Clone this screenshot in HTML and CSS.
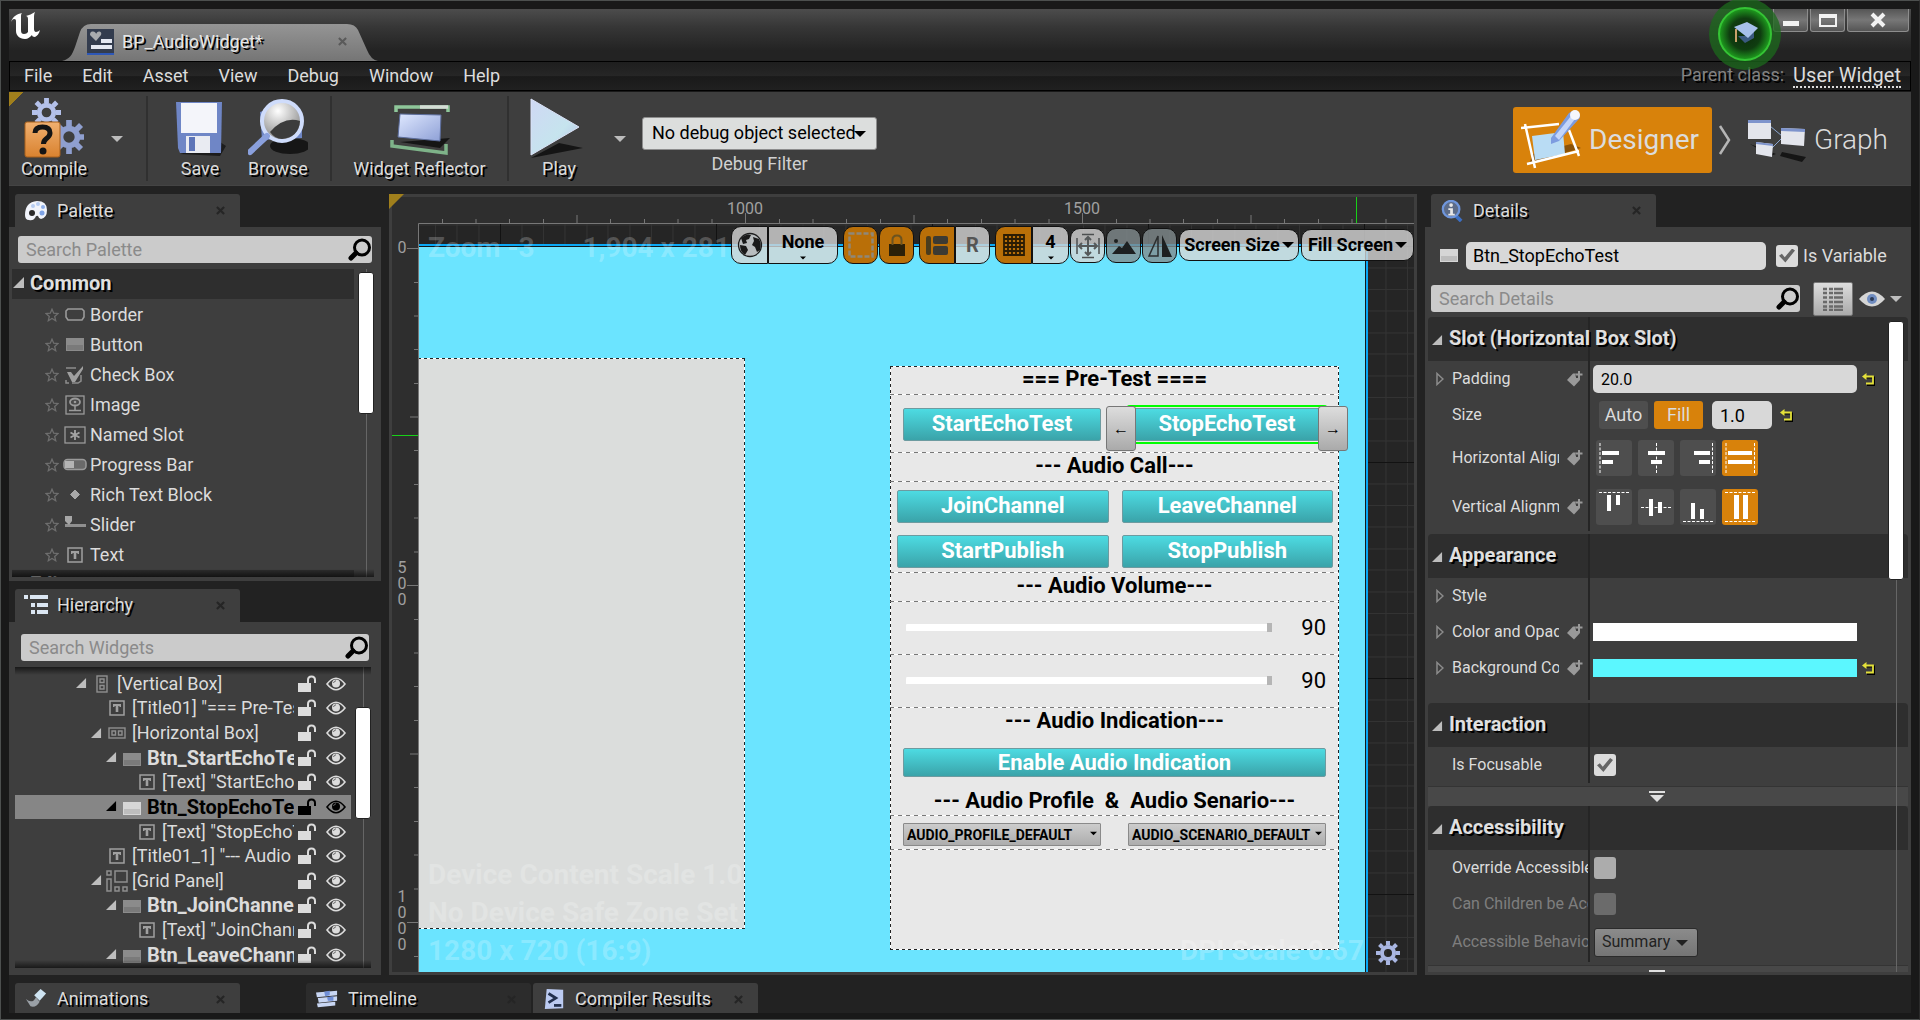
FILE: index.html
```html
<!DOCTYPE html>
<html lang="en">
<head>
<meta charset="utf-8">
<title>BP_AudioWidget</title>
<link rel="stylesheet" href="styles.css">
</head>
<body>
<svg class="defs" aria-hidden="true">
  <defs>
    <linearGradient id="g-blue" x1="0" y1="0" x2="1" y2="1"><stop offset="0" stop-color="#dfe8ff"/><stop offset="1" stop-color="#8ea0d6"/></linearGradient>
    <linearGradient id="g-play" x1="0" y1="0" x2="1" y2="1"><stop offset="0" stop-color="#cfd8f4"/><stop offset=".6" stop-color="#c6e4ee"/><stop offset="1" stop-color="#b4bfe6"/></linearGradient>
    <linearGradient id="g-orange" x1="0" y1="0" x2="0" y2="1"><stop offset="0" stop-color="#f0b070"/><stop offset="1" stop-color="#d9822f"/></linearGradient>
    <linearGradient id="g-tab" x1="0" y1="0" x2="0" y2="1"><stop offset="0" stop-color="#959595"/><stop offset="1" stop-color="#757575"/></linearGradient>
    <radialGradient id="g-lens" cx=".4" cy=".25" r=".7"><stop offset="0" stop-color="#fff"/><stop offset="1" stop-color="#8d8d8d"/></radialGradient>
    <radialGradient id="g-glow"><stop offset="0" stop-color="#0c2a0c"/><stop offset=".6" stop-color="#0f3d10"/><stop offset="1" stop-color="#1fa01f"/></radialGradient>
  </defs>
  <symbol id="i-gear" viewBox="-12 -12 24 24"><circle r="6" fill="none" stroke="currentColor" stroke-width="4"/><path d="M0-7.500V-12M0 7.500V12M7.500 0H12M-7.500 0H-12M5.300-5.300L8.500-8.500M-5.300 5.300L-8.500 8.500M5.300 5.300L8.500 8.500M-5.300-5.300L-8.500-8.500" stroke="currentColor" stroke-width="4"/></symbol>
  <symbol id="i-close" viewBox="0 0 10 10"><path d="M1 1L9 9M9 1L1 9" stroke="currentColor" stroke-width="2.400"/></symbol>
  <symbol id="i-down" viewBox="0 0 12 8"><path d="M0 1H12L6 7Z" fill="currentColor"/></symbol>
  <symbol id="i-open" viewBox="0 0 12 12"><path d="M11 0V11H0Z" fill="currentColor"/></symbol>
  <symbol id="i-closed" viewBox="0 0 8 14"><path d="M1 1.500L7 7L1 12.500Z" fill="none" stroke="#8c8c8c" stroke-width="1.500"/></symbol>
  <symbol id="i-search" viewBox="0 0 24 24"><circle cx="14" cy="9.500" r="7.500" fill="none" stroke="#000" stroke-width="3"/><path d="M8 15L3 20" stroke="#000" stroke-width="5" stroke-linecap="round"/></symbol>
  <symbol id="i-star" viewBox="0 0 14 14"><path d="M7 1.200L8.700 5.200L13 5.600L9.700 8.400L10.700 12.700L7 10.400L3.300 12.700L4.300 8.400L1 5.600L5.300 5.200Z" fill="none" stroke="#6e6e6e" stroke-width="1.300"/></symbol>
  <symbol id="i-lock" viewBox="0 0 18 18"><path d="M0 8H13V17H0Z" fill="currentColor"/><path d="M10 9V5Q10 1.500 13.500 1.500T17 5V8" fill="none" stroke="currentColor" stroke-width="2"/></symbol>
  <symbol id="i-eye" viewBox="0 0 20 14"><path d="M1 7Q10-4.500 19 7Q10 18.500 1 7Z" fill="none" stroke="currentColor" stroke-width="1.600"/><circle cx="10" cy="6.500" r="4" fill="currentColor"/><path d="M7.500 6Q8 4 10 3.800" fill="none" stroke="#666" stroke-width="1"/></symbol>
  <symbol id="i-text" viewBox="0 0 16 16"><rect x="1" y="1" width="14" height="14" fill="none" stroke="#a0a0a0" stroke-width="1.500"/><path d="M4 4H12V7H10.500V6H9.300V12H6.700V6H5.500V7H4Z" fill="#a0a0a0"/></symbol>
  <symbol id="i-button" viewBox="0 0 18 13"><rect width="18" height="13" fill="#8b8b8b"/><rect x="1" y="7" width="16" height="5" fill="#7a7a7a"/></symbol>
  <symbol id="i-button-lit" viewBox="0 0 18 13"><rect width="18" height="13" fill="#d6d6d6"/><rect x="1" y="7" width="16" height="5" fill="#bdbdbd"/></symbol>
  <symbol id="i-vbox" viewBox="0 0 12 18"><rect x="1" y="1" width="10" height="16" fill="none" stroke="#8f8f8f" stroke-width="1.400"/><path d="M4 4H8V7.500H4ZM4 10.500H8V14H4Z" fill="none" stroke="#8f8f8f" stroke-width="1.400"/></symbol>
  <symbol id="i-hbox" viewBox="0 0 18 12"><rect x="1" y="1" width="16" height="10" fill="none" stroke="#8f8f8f" stroke-width="1.400"/><path d="M4 4H7.500V8H4ZM10.500 4H14V8H10.500Z" fill="none" stroke="#8f8f8f" stroke-width="1.400"/></symbol>
  <symbol id="i-grid" viewBox="0 0 22 22"><path d="M1 1H5V5H1ZM9 1H21V12H9ZM1 9H5V21H1ZM9 17H13V21H9ZM17 17H21V21H17Z" fill="none" stroke="#8f8f8f" stroke-width="1.500"/></symbol>
  <symbol id="i-tag" viewBox="0 0 16 16"><path d="M0 9L6 2.500H9V7H13V9L7 15.500Z" fill="#999"/><path d="M12 0V7M8.500 3.500H16" stroke="#3e3e3e" stroke-width="4"/><path d="M12 0V7M8.500 3.500H15.500" stroke="#999" stroke-width="2"/></symbol>
  <symbol id="i-reset" viewBox="0 0 14 13"><path d="M3 3.500H11V11H4" fill="none" stroke="#000" stroke-width="2" transform="translate(1 1)"/><path d="M3 3.500H11V10.500H4" fill="none" stroke="#e3e03a" stroke-width="1.800"/><path d="M0 3.500L4.500 0V7Z" fill="#e3e03a"/></symbol>
</svg>

<div class="window">
  <header class="titlebar">
    <svg class="logo" viewBox="0 0 30 30" role="img" aria-label="Unreal"><path fill="#fff" d="M0 10C2 4 6 2 11 1c-1 1-1 2-1 4v13c0 3 1 4 3 4 2 0 3-1 4-2V7c0-2-1-3-2-3 3-1 6-2 9-4-1 2-1 4-1 6v11c0 2 1 3 2 3 1 0 3-1 4-2-1 4-3 6-5 7-2 0-3-1-3-2-2 2-4 4-7 4-6 0-9-4-9-8V10c0-2 0-3-2-3-1 0-2 1-3 3z"/></svg>
    <div class="doc-tab">
      <svg class="doc-shape" viewBox="0 0 316 37" preserveAspectRatio="none"><path fill="url(#g-tab)" d="M0 37C8 35 10 31 13 23L18 8Q21 0 29 0H285Q293 0 296 6L305 26Q309 36 316 37Z"/></svg>
      <svg class="doc-icon" viewBox="0 0 27 26"><rect width="27" height="26" fill="#333c4e"/><path d="M0 24H27V26H0Z" fill="#2d57b8"/><path d="M9 12L3 6Q3 2 6 2.500T9 5Q10 2 12.500 2.500T14 6Z" fill="#a9abae"/><path d="M14 10H25V14H14ZM4 16H25V20H4Z" fill="#e4e8f2"/></svg>
      <span class="shadowed">BP_AudioWidget*</span>
      <button class="tab-close" aria-label="Close tab"><svg><use href="#i-close"/></svg></button>
    </div>
    <div class="win-buttons">
      <button aria-label="Minimize"><svg viewBox="0 0 20 16"><rect x="2" y="9" width="16" height="5" fill="#f2f2f2"/></svg></button>
      <button aria-label="Restore"><svg viewBox="0 0 20 16"><path d="M2 3H18V14H2Z" fill="none" stroke="#f2f2f2" stroke-width="2"/><path d="M2 4H18" stroke="#f2f2f2" stroke-width="4"/></svg></button>
      <button class="wide" aria-label="Close"><svg viewBox="0 0 20 16"><path d="M4 2L16 14M16 2L4 14" stroke="#f2f2f2" stroke-width="4"/></svg></button>
    </div>
    <button class="tutorial" aria-label="Tutorial"><svg viewBox="-36 -36 72 72"><circle r="36" fill="#1c6a1c" opacity=".75"/><circle r="26" fill="url(#g-glow)" stroke="#35c435" stroke-width="2"/><path d="M-7 2L0 9L9 4V-3L0 2Z" fill="#3b5a80"/><path d="M-11-7L2-12L13-6L3 4Z" fill="#a6c0ea"/><path d="M-9-5V8" stroke="#c9a06a" stroke-width="2"/></svg></button>
  </header>

  <nav class="menubar">
    <button>File</button><button>Edit</button><button>Asset</button><button>View</button><button>Debug</button><button>Window</button><button>Help</button>
    <p class="parent-class"><span class="shadowed">Parent class:</span><a href="#">User Widget</a></p>
  </nav>

  <section class="toolbar" aria-label="Toolbar">
    <div class="tool-group first">
      <button class="tool w72">
        <svg viewBox="0 0 60 60"><use href="#i-gear" x="8" y="0" width="29" height="29" color="#b4c1ea"/><use href="#i-gear" x="28" y="22" width="34" height="34" color="#8f9fcf"/><rect x="1" y="24" width="35" height="35" rx="2" fill="url(#g-orange)" stroke="#a8601c"/><path d="M11 35Q11 29 18.500 29T26 35Q26 38 22 41Q19.500 43 19.500 46" fill="none" stroke="#151515" stroke-width="5"/><circle cx="19" cy="53" r="3.500" fill="#151515"/></svg>
        <span class="shadowed">Compile</span>
      </button>
      <button class="tool-more" aria-label="Compile options"><svg><use href="#i-down"/></svg></button>
    </div>
    <div class="tool-group">
      <button class="tool w64">
        <svg viewBox="0 0 60 60"><path d="M10 56L50 58L56 48L50 44Z" fill="#1c1c1c"/><path d="M6 4H52L51 55H10L8 50Z" fill="#6f86c6"/><path d="M11 5H47V35H11Z" fill="#f4f5fa"/><path d="M16 38H40V55H16Z" fill="#e9ebf2"/><path d="M19 39H25V53H19Z" fill="#5d74b8"/></svg>
        <span class="shadowed">Save</span>
      </button>
      <button class="tool w64 gap">
        <svg viewBox="0 0 60 60"><ellipse cx="42" cy="48" rx="20" ry="8" fill="#161616"/><path d="M12 14L22 10L54 14V40L14 42Z" fill="#6e86c4"/><circle cx="34" cy="23" r="20" fill="url(#g-lens)" stroke="#cfdcfb" stroke-width="4"/><path d="M22 34Q36 18 52 23Q51 39 34 41Q27 41 22 34Z" fill="#3c3c3c"/><path d="M19 38L2 54" stroke="#8aa0dd" stroke-width="6" stroke-linecap="round"/></svg>
        <span class="shadowed">Browse</span>
      </button>
    </div>
    <div class="tool-group">
      <button class="tool w135">
        <svg viewBox="0 0 60 60"><path d="M10 44L60 40L50 50Z" fill="#151515"/><path d="M10 16L51 17L50 43L8 39Z" fill="url(#g-blue)" stroke="#5c6d9c"/><path d="M6 14V9H58V14" fill="none" stroke="#8fc79a" stroke-width="3.500"/><path d="M30 9H58" stroke="#d5ddd6" stroke-width="3.500"/><path d="M2 42V48L56 55V46" fill="none" stroke="#7eb389" stroke-width="3.500"/></svg>
        <span class="shadowed">Widget Reflector</span>
      </button>
    </div>
    <div class="tool-group last">
      <button class="tool w60">
        <svg viewBox="0 0 60 60"><path d="M2 60L54 50L30 45Z" fill="#151515"/><path d="M2 1L50 29L2 57Z" fill="url(#g-play)" stroke="#dbe2f7"/></svg>
        <span class="shadowed">Play</span>
      </button>
      <button class="tool-more play-more" aria-label="Play options"><svg><use href="#i-down"/></svg></button>
      <div class="debug">
        <div class="combo"><select id="debug"><option>No debug object selected</option></select><svg><use href="#i-down"/></svg></div>
        <label for="debug">Debug Filter</label>
      </div>
    </div>
    <div class="modes">
      <button class="mode active">
        <svg viewBox="0 0 60 60"><path d="M8 54L60 38L50 34L12 44Z" fill="#8a5208"/><path d="M11 26L42 22L44 44L14 50Z" fill="#b9dcf4"/><path d="M0 18L38 14M4 14L14 58M6 54L58 41M48 20L58 46" stroke="#fff" stroke-width="2.500"/><path d="M30 28L48 3Q53-1 57 3T57 10L38 31L30 34Z" fill="#7d9ce0"/><path d="M34 26L50 6L54 9L38 30Z" fill="#c4d6fa"/><circle cx="54" cy="5" r="5" fill="#f5f7fd"/></svg>
        <span>Designer</span>
      </button>
      <svg class="chevron" viewBox="0 0 14 30"><path d="M2 1L11 15L2 29" fill="none" stroke="#b5b5b5" stroke-width="2.500"/></svg>
      <button class="mode light">
        <svg viewBox="0 0 60 60"><path d="M4 34L30 44L24 46ZM36 42L60 47L56 52L34 46Z" fill="#151515"/><path d="M24 16L36 26M36 28L24 40" stroke="#8ba5cf"/><path d="M2 10H25V29H2Z" fill="#e3e5ec"/><path d="M2 10H25V13H2Z" fill="#7d93cc"/><path d="M35 18L59 19L58 36L35 34Z" fill="#e3e5ec"/><path d="M35 18L59 19V22L35 21Z" fill="#7d93cc"/><path d="M10 32L27 34L26 47L10 44Z" fill="#e3e5ec"/><path d="M10 32L27 34V36L10 34Z" fill="#7d93cc"/></svg>
        <span>Graph</span>
      </button>
    </div>
  </section>

  <main class="workspace">
    <div class="side left">
      <section class="dock">
        <div class="tab"><svg class="tab-icon" viewBox="0 0 24 22"><path d="M1 15Q1 2 13 1Q23 1 23 10Q23 18 17 19Q15 19 14 16Q12 15 11 18Q9 21 5 20Q1 20 1 15Z" fill="#f1f4fb"/><circle cx="8" cy="13" r="3" fill="#2b2b2b"/><circle cx="9" cy="6" r="2" fill="#b7cdf2"/><circle cx="14" cy="4" r="2" fill="#b7cdf2"/><circle cx="19" cy="7" r="2" fill="#8fb0ea"/><circle cx="18" cy="13" r="2.500" fill="#7ea3e6"/></svg><h2 class="shadowed">Palette</h2><button class="tab-close" aria-label="Close"><svg><use href="#i-close"/></svg></button></div>
        <div class="panel palette">
          <div class="search"><input type="search" placeholder="Search Palette" aria-label="Search Palette"><svg><use href="#i-search"/></svg></div>
          <div class="scroller">
            <div class="palette-list">
              <h3 class="group"><svg><use href="#i-open"/></svg><span class="shadowed">Common</span></h3>
              <ul>
                <li><svg class="star"><use href="#i-star"/></svg><svg class="pi" viewBox="0 0 24 24"><path d="M5 6H19L21 8V14L19 17H5L3 14V8Z" fill="none" stroke="#9a9a9a" stroke-width="1.600"/></svg>Border</li>
                <li><svg class="star"><use href="#i-star"/></svg><svg class="pi" viewBox="0 0 24 24"><use href="#i-button" x="3" y="5" width="18" height="13"/></svg>Button</li>
                <li><svg class="star"><use href="#i-star"/></svg><svg class="pi" viewBox="0 0 24 24"><path d="M3 5H13M3 17V20H6M18 12V18L15 20H9" fill="none" stroke="#8d8d8d" stroke-width="1.500"/><path d="M4 9H8L11 13L20 3V6L12 19H9Z" fill="#a0a0a0"/></svg>Check Box</li>
                <li><svg class="star"><use href="#i-star"/></svg><svg class="pi" viewBox="0 0 24 24"><rect x="3" y="3" width="18" height="18" fill="none" stroke="#9a9a9a" stroke-width="1.300"/><path d="M12 11V17M6 17.500H18" stroke="#9a9a9a" stroke-width="1.500"/><ellipse cx="12" cy="9" rx="5" ry="3.500" fill="#4a4a4a" stroke="#9a9a9a" stroke-width="1.800"/><circle cx="12" cy="9" r="1.300" fill="#9a9a9a"/></svg>Image</li>
                <li><svg class="star"><use href="#i-star"/></svg><svg class="pi" viewBox="0 0 24 24"><rect x="2" y="4" width="20" height="16" fill="none" stroke="#9a9a9a" stroke-width="1.300"/><path d="M12 7V17M7.500 9.500L16.500 14.500M16.500 9.500L7.500 14.500" stroke="#a4a4a4" stroke-width="1.800"/></svg>Named Slot</li>
                <li><svg class="star"><use href="#i-star"/></svg><svg class="pi" viewBox="0 0 24 24"><rect x="1" y="6.500" width="22" height="10" rx="3.500" fill="#6a6a6a" stroke="#9a9a9a" stroke-width="1.500"/><path d="M2 8H11V15H2Z" fill="#b4b4b4"/></svg>Progress Bar</li>
                <li><svg class="star"><use href="#i-star"/></svg><svg class="pi" viewBox="0 0 24 24"><path d="M12 7L16.500 11.500L12 16L7.500 11.500Z" fill="#a8a8a8" stroke="#a8a8a8"/></svg>Rich Text Block</li>
                <li><svg class="star"><use href="#i-star"/></svg><svg class="pi" viewBox="0 0 24 24"><path d="M2 11H23V14H2Z" fill="#8f8f8f"/><path d="M2 3H9V8L6 12L2 8Z" fill="#a6a6a6"/></svg>Slider</li>
                <li><svg class="star"><use href="#i-star"/></svg><svg class="pi" viewBox="0 0 24 24"><use href="#i-text" x="4" y="4" width="16" height="16"/></svg>Text</li>
              </ul>
              <h3 class="group"><svg><use href="#i-open"/></svg><span class="shadowed">Editor</span></h3>
            </div>
            <div class="scrollbar"><div class="thumb palette-thumb"></div></div>
            <div class="fade-bottom"></div>
          </div>
        </div>
      </section>

      <section class="dock">
        <div class="tab"><svg class="tab-icon" viewBox="0 0 24 22"><path d="M0 1H4V5H0ZM6 1H24V5H6ZM7 9H11V13H7ZM13 9H24V13H13ZM7 16H11V20H7ZM13 16H24V20H13Z" fill="#dbe6f2"/></svg><h2 class="shadowed">Hierarchy</h2><button class="tab-close" aria-label="Close"><svg><use href="#i-close"/></svg></button></div>
        <div class="panel hierarchy">
          <div class="search"><input type="search" placeholder="Search Widgets" aria-label="Search Widgets"><svg><use href="#i-search"/></svg></div>
          <div class="scroller">
            <ul class="tree">
              <li class="l0"><svg class="tri"><use href="#i-open"/></svg><svg class="ti"><use href="#i-vbox" x="9" width="12" height="18" y="3"/></svg><span>[Vertical Box]</span><button aria-label="Lock"><svg class="lk"><use href="#i-lock"/></svg></button><button aria-label="Visible"><svg class="ey"><use href="#i-eye"/></svg></button></li>
              <li class="l1"><i class="tri"></i><svg class="ti"><use href="#i-text" x="7" width="16" height="16" y="4"/></svg><span>[Title01] "=== Pre-Test ===="</span><button aria-label="Lock"><svg class="lk"><use href="#i-lock"/></svg></button><button aria-label="Visible"><svg class="ey"><use href="#i-eye"/></svg></button></li>
              <li class="l1"><svg class="tri"><use href="#i-open"/></svg><svg class="ti"><use href="#i-hbox" x="6" width="18" height="12" y="6"/></svg><span>[Horizontal Box]</span><button aria-label="Lock"><svg class="lk"><use href="#i-lock"/></svg></button><button aria-label="Visible"><svg class="ey"><use href="#i-eye"/></svg></button></li>
              <li class="l2 strong"><svg class="tri"><use href="#i-open"/></svg><svg class="ti"><use href="#i-button" x="6" width="18" height="13" y="7"/></svg><span>Btn_StartEchoTest</span><button aria-label="Lock"><svg class="lk"><use href="#i-lock"/></svg></button><button aria-label="Visible"><svg class="ey"><use href="#i-eye"/></svg></button></li>
              <li class="l3"><i class="tri"></i><svg class="ti"><use href="#i-text" x="7" width="16" height="16" y="4"/></svg><span>[Text] "StartEchoTest"</span><button aria-label="Lock"><svg class="lk"><use href="#i-lock"/></svg></button><button aria-label="Visible"><svg class="ey"><use href="#i-eye"/></svg></button></li>
              <li class="l2 strong selected"><svg class="tri"><use href="#i-open"/></svg><svg class="ti"><use href="#i-button-lit" x="6" width="18" height="13" y="7"/></svg><span>Btn_StopEchoTest</span><button aria-label="Lock"><svg class="lk"><use href="#i-lock"/></svg></button><button aria-label="Visible"><svg class="ey"><use href="#i-eye"/></svg></button></li>
              <li class="l3"><i class="tri"></i><svg class="ti"><use href="#i-text" x="7" width="16" height="16" y="4"/></svg><span>[Text] "StopEchoTest"</span><button aria-label="Lock"><svg class="lk"><use href="#i-lock"/></svg></button><button aria-label="Visible"><svg class="ey"><use href="#i-eye"/></svg></button></li>
              <li class="l1"><i class="tri"></i><svg class="ti"><use href="#i-text" x="7" width="16" height="16" y="4"/></svg><span>[Title01_1] "--- Audio Call---"</span><button aria-label="Lock"><svg class="lk"><use href="#i-lock"/></svg></button><button aria-label="Visible"><svg class="ey"><use href="#i-eye"/></svg></button></li>
              <li class="l1"><svg class="tri"><use href="#i-open"/></svg><svg class="ti"><use href="#i-grid" x="4" width="22" height="22" y="1"/></svg><span>[Grid Panel]</span><button aria-label="Lock"><svg class="lk"><use href="#i-lock"/></svg></button><button aria-label="Visible"><svg class="ey"><use href="#i-eye"/></svg></button></li>
              <li class="l2 strong"><svg class="tri"><use href="#i-open"/></svg><svg class="ti"><use href="#i-button" x="6" width="18" height="13" y="7"/></svg><span>Btn_JoinChannel</span><button aria-label="Lock"><svg class="lk"><use href="#i-lock"/></svg></button><button aria-label="Visible"><svg class="ey"><use href="#i-eye"/></svg></button></li>
              <li class="l3"><i class="tri"></i><svg class="ti"><use href="#i-text" x="7" width="16" height="16" y="4"/></svg><span>[Text] "JoinChannel"</span><button aria-label="Lock"><svg class="lk"><use href="#i-lock"/></svg></button><button aria-label="Visible"><svg class="ey"><use href="#i-eye"/></svg></button></li>
              <li class="l2 strong"><svg class="tri"><use href="#i-open"/></svg><svg class="ti"><use href="#i-button" x="6" width="18" height="13" y="7"/></svg><span>Btn_LeaveChannel</span><button aria-label="Lock"><svg class="lk"><use href="#i-lock"/></svg></button><button aria-label="Visible"><svg class="ey"><use href="#i-eye"/></svg></button></li>
            </ul>
            <div class="scrollbar"><div class="thumb tree-thumb"></div></div>
            <div class="fade-top"></div>
            <div class="fade-bottom"></div>
          </div>
        </div>
      </section>
    </div>

    <section class="designer" aria-label="Designer">
      <svg class="rulers">
        <defs>
          <pattern id="p-h" patternUnits="userSpaceOnUse" x="353" y="0" width="337" height="30"><path d="M.500 16V26M34.500 22V26M68 22V26M101.500 22V26M135.500 22V26M169 18V26M202.500 22V26M236.500 22V26M270 22V26M304 22V26" stroke="#777"/></pattern>
          <pattern id="p-v" patternUnits="userSpaceOnUse" x="0" y="51" width="30" height="337"><path d="M15 .500H26M22 34.500H26M22 68H26M22 101.500H26M22 135.500H26M18 169H26M22 202.500H26M22 236.500H26M22 270H26M22 304H26" stroke="#777"/></pattern>
        </defs>
        <rect x="27" y="0" width="100%" height="27" fill="url(#p-h)"/>
        <rect x="0" y="27" width="27" height="100%" fill="url(#p-v)"/>
        <path d="M26.500 3000V26.500H3000" fill="none" stroke="#777"/>
        <path d="M964.500 0V26M0 238.500H26" stroke="#18d018"/>
        <g fill="#a0a0a0" font-size="16" text-anchor="middle"><text x="353" y="17">1000</text><text x="690" y="17">1500</text><text x="10" y="56">0</text>
        <text x="10" y="376">5<tspan x="10" dy="16">0</tspan><tspan x="10" dy="16">0</tspan></text>
        <text x="10" y="705">1<tspan x="10" dy="16">0</tspan><tspan x="10" dy="16">0</tspan><tspan x="10" dy="16">0</tspan></text></g>
      </svg>
      <div class="canvas">
        <svg class="gridlines"><defs><pattern id="p-grid" patternUnits="userSpaceOnUse" x="81" y="22" width="216" height="216"><path d="M22 0V216M43.500 0V216M65 0V216M87 0V216M108 0V216M130 0V216M151.500 0V216M173 0V216M195 0V216M0 22H216M0 43.500H216M0 65H216M0 87H216M0 108H216M0 130H216M0 151.500H216M0 173H216M0 195H216" stroke="#333"/><path d="M.500 0V216M0 .500H216" stroke="#121212"/></pattern></defs><rect width="100%" height="100%" fill="url(#p-grid)"/></svg>
        <div class="artboard"></div>
        <div class="blank dashed"></div>
        <form class="widget dashed">
          <h4 class="rule">=== Pre-Test ====</h4>
          <div class="pair echo rule">
            <button type="button" class="cyan">StartEchoTest</button>
            <div class="chosen"><button type="button" class="cyan">StopEchoTest</button>
              <button type="button" class="shift prev" aria-label="Move left">←</button><button type="button" class="shift next" aria-label="Move right">→</button></div>
          </div>
          <h4 class="rule">--- Audio Call---</h4>
          <div class="quad rule">
            <button type="button" class="cyan">JoinChannel</button><button type="button" class="cyan">LeaveChannel</button>
            <button type="button" class="cyan">StartPublish</button><button type="button" class="cyan">StopPublish</button>
          </div>
          <h4 class="rule">--- Audio Volume---</h4>
          <div class="volume rule"><input type="range" value="100" aria-label="Record volume"><output>90</output></div>
          <div class="volume rule"><input type="range" value="100" aria-label="Playback volume"><output>90</output></div>
          <h4>--- Audio Indication---</h4>
          <button type="button" class="cyan full">Enable Audio Indication</button>
          <h4 class="rule profile">--- Audio Profile &nbsp;&amp;&nbsp; Audio Senario---</h4>
          <div class="pair combos rule">
            <div class="mini"><select aria-label="Audio profile"><option>AUDIO_PROFILE_DEFAULT</option></select><svg><use href="#i-down"/></svg></div>
            <div class="mini"><select aria-label="Audio scenario"><option>AUDIO_SCENARIO_DEFAULT</option></select><svg><use href="#i-down"/></svg></div>
          </div>
        </form>
        <div class="mark zoom-mark">Zoom -3</div>
        <div class="mark size-mark">1,904 x 281</div>
        <div class="mark info-mark">Device Content Scale 1.0<br>No Device Safe Zone Set<br>1280 x 720 (16:9)</div>
        <div class="mark dpi-mark">DPI Scale 0.67</div>
        <svg class="settings" color="#a9b6e2"><use href="#i-gear"/></svg>
        <div class="overlay">
          <div class="seg">
            <button class="w37" aria-label="Localization"><svg viewBox="0 0 26 26"><circle cx="13" cy="13" r="11.500" fill="#b9bdbf" stroke="#1d1d1d" stroke-width="1.300"/><path d="M4 6Q9 1 14 3L12 7L9 8L10 11L6 12ZM3 13L9 14L11 18L8 23Q3 20 3 13ZM16 5L22 7Q25 12 23 18L20 20L18 15L15 13L17 9Z" fill="#1a1a1a"/></svg></button>
            <button class="w69 drop">None<svg><use href="#i-down"/></svg></button>
          </div>
          <div class="seg apart"><button class="on w35" aria-label="Outlines"><svg viewBox="0 0 26 26"><rect x="1.500" y="1.500" width="23" height="23" fill="none" stroke="#8f8878" stroke-width="2.500" stroke-dasharray="5 2"/></svg></button></div>
          <div class="seg"><button class="on w35" aria-label="Respect locks"><svg viewBox="0 0 26 26"><path d="M5 12H21V24H5Z" fill="#2b2008"/><path d="M8.500 13V8Q8.500 3.500 13 3.500T17.500 8V13" fill="none" stroke="#6b5320" stroke-width="2"/></svg></button></div>
          <div class="seg apart"><button class="on w36" aria-label="Layout"><svg viewBox="0 0 26 26"><rect x="2" y="4" width="5" height="19" rx="2" fill="#4a3c1d"/><rect x="9" y="4" width="15" height="8" rx="2" fill="#3c3a33"/><rect x="9" y="14" width="15" height="9" rx="2" fill="#3c3a33"/></svg></button><button class="w35 gray">R</button></div>
          <div class="seg apart"><button class="on w37" aria-label="Grid snap"><svg viewBox="0 0 26 26"><path d="M3 3H23V23H3ZM7 3V23M11 3V23M15 3V23M19 3V23M3 7H23M3 11H23M3 15H23M3 19H23" fill="none" stroke="#2b1c04" stroke-width="1.800"/></svg></button><button class="w37 drop">4<svg><use href="#i-down"/></svg></button></div>
          <div class="seg"><button class="w35 low" aria-label="Zoom to fit"><svg viewBox="0 0 26 26"><path d="M2 5V21M24 5V21M7 1.500H19M7 24.500H19" stroke="#4c4f50" stroke-width="1.500"/><path d="M13 4V22M4 13H22M10 7L13 4L16 7M10 19L13 22L16 19M7 10L4 13L7 16M19 10L22 13L19 16" fill="none" stroke="#55595a" stroke-width="2"/></svg></button></div>
          <div class="seg"><button class="w35 low dim" aria-label="Preview image"><svg viewBox="0 0 26 26"><path d="M1 21L8 13L11 15L16 8L25 21Z" fill="#1d2021"/><circle cx="5" cy="8" r="2" fill="#1d2021"/></svg></button></div>
          <div class="seg"><button class="w35 low dim" aria-label="Flip preview"><svg viewBox="0 0 26 26"><path d="M11 3V23H2Z" fill="none" stroke="#2b2e2f" stroke-width="1.500"/><path d="M15 2V24H25Z" fill="#1d2021"/></svg></button></div>
          <div class="seg end"><button class="text w119">Screen Size<svg><use href="#i-down"/></svg></button></div>
          <div class="seg end"><button class="text w112">Fill Screen<svg><use href="#i-down"/></svg></button></div>
        </div>
      </div>
    </section>

    <section class="dock side right">
      <div class="tab"><svg class="tab-icon" viewBox="0 0 24 24"><path d="M15 16L22 23" stroke="#3c6fc4" stroke-width="4"/><circle cx="11" cy="10" r="9" fill="#5d6c88" stroke="#6f96dc" stroke-width="2.500"/><circle cx="11" cy="5.500" r="2" fill="#e8e8e8"/><path d="M8 9H13V15H15V17H8V15H10V11H8Z" fill="#e8e8e8"/></svg><h2 class="shadowed">Details</h2><button class="tab-close" aria-label="Close"><svg><use href="#i-close"/></svg></button></div>
      <div class="panel details">
        <div class="name-row">
          <svg class="name-icon"><use href="#i-button-lit"/></svg>
          <input class="field" type="text" value="Btn_StopEchoTest" aria-label="Widget name">
          <label class="check"><input type="checkbox" checked>Is Variable</label>
        </div>
        <div class="find-row">
          <div class="search"><input type="search" placeholder="Search Details" aria-label="Search Details"><svg><use href="#i-search"/></svg></div>
          <button class="matrix" aria-label="Property matrix"><svg viewBox="0 0 22 24"><path d="M1 2H5M7 2H11M12 2H21M1 6H5M7 6H11M12 6H21M1 10.500H5M7 10.500H11M12 10.500H21M1 15H5M7 15H11M12 15H21M1 19.500H5M7 19.500H11M12 19.500H21M1 23H5M7 23H11M12 23H21" stroke="#6a6a6a" stroke-width="2.400"/></svg></button>
          <button class="view" aria-label="View options"><svg class="bigeye" viewBox="0 0 26 16"><path d="M0 8Q13-7 26 8Q13 23 0 8Z" fill="#d5d5d5"/><circle cx="13" cy="8" r="5" fill="#6f8cc0"/><circle cx="13" cy="8" r="2" fill="#2b3a55"/></svg><svg class="dd"><use href="#i-down"/></svg></button>
        </div>
        <div class="props">
          <h3 class="category"><svg><use href="#i-open"/></svg><span class="shadowed">Slot (Horizontal Box Slot)</span></h3>
          <div class="prop"><label class="name" for="pad"><svg class="exp"><use href="#i-closed"/></svg><span>Padding</span><svg class="tag"><use href="#i-tag"/></svg></label><div class="value"><input id="pad" class="field long" type="text" value="20.0"><button aria-label="Reset"><svg class="reset"><use href="#i-reset"/></svg></button></div></div>
          <div class="prop"><label class="name" for="size"><i class="exp"></i><span>Size</span></label><div class="value size"><button class="opt">Auto</button><button class="opt on">Fill</button><input id="size" class="field short" type="text" value="1.0"><button aria-label="Reset"><svg class="reset"><use href="#i-reset"/></svg></button></div></div>
          <div class="prop tall"><div class="name"><i class="exp"></i><span>Horizontal Alignment</span><svg class="tag"><use href="#i-tag"/></svg></div><div class="value aligns">
            <button aria-label="Left"><svg viewBox="0 0 36 36"><path d="M4 3V33" stroke="#fff" stroke-dasharray="3 1.500"/><path d="M6 11H23V15H6ZM6 20H17V24H6Z" fill="#fff"/></svg></button>
            <button aria-label="Center"><svg viewBox="0 0 36 36"><path d="M18.500 3V33" stroke="#fff" stroke-dasharray="3 1.500"/><path d="M10 11H27V15H10ZM13 20H24V24H13Z" fill="#fff"/></svg></button>
            <button aria-label="Right"><svg viewBox="0 0 36 36"><path d="M32.500 3V33" stroke="#fff" stroke-dasharray="3 1.500"/><path d="M14 11H30V15H14ZM19 20H30V24H19Z" fill="#fff"/></svg></button>
            <button class="on" aria-label="Fill"><svg viewBox="0 0 36 36"><path d="M4 3V33M32.500 3V33" stroke="#fff" stroke-dasharray="3 1.500"/><path d="M6 11H30V15H6ZM6 20H30V24H6Z" fill="#fff"/></svg></button></div></div>
          <div class="prop tall"><div class="name"><i class="exp"></i><span>Vertical Alignment</span><svg class="tag"><use href="#i-tag"/></svg></div><div class="value aligns">
            <button aria-label="Top"><svg viewBox="0 0 36 36"><path d="M3 3.500H33" stroke="#fff" stroke-dasharray="3 1.500"/><path d="M11 6H15V22H11ZM20 6H24V16H20Z" fill="#fff"/></svg></button>
            <button aria-label="Middle"><svg viewBox="0 0 36 36"><path d="M3 18.500H33" stroke="#fff" stroke-dasharray="3 1.500"/><path d="M11 10H15V27H11ZM20 13H24V24H20Z" fill="#fff"/></svg></button>
            <button aria-label="Bottom"><svg viewBox="0 0 36 36"><path d="M3 32.500H33" stroke="#fff" stroke-dasharray="3 1.500"/><path d="M11 14H15V30H11ZM20 20H24V30H20Z" fill="#fff"/></svg></button>
            <button class="on" aria-label="Fill"><svg viewBox="0 0 36 36"><path d="M3 3.500H33M3 32.500H33" stroke="#fff" stroke-dasharray="3 1.500"/><path d="M12 6H17V30H12ZM21 6H26V30H21Z" fill="#fff"/></svg></button></div></div>

          <h3 class="category spaced"><svg><use href="#i-open"/></svg><span class="shadowed">Appearance</span></h3>
          <div class="prop"><div class="name"><svg class="exp"><use href="#i-closed"/></svg><span>Style</span></div></div>
          <div class="prop"><div class="name"><svg class="exp"><use href="#i-closed"/></svg><span>Color and Opacity</span><svg class="tag"><use href="#i-tag"/></svg></div><div class="value"><button class="swatch white" aria-label="Color and Opacity"></button></div></div>
          <div class="prop"><div class="name"><svg class="exp"><use href="#i-closed"/></svg><span>Background Color</span><svg class="tag"><use href="#i-tag"/></svg></div><div class="value"><button class="swatch aqua" aria-label="Background Color"></button><button aria-label="Reset"><svg class="reset"><use href="#i-reset"/></svg></button></div></div>
          <div class="prop pad"></div>

          <h3 class="category spaced"><svg><use href="#i-open"/></svg><span class="shadowed">Interaction</span></h3>
          <div class="prop"><label class="name" for="focus"><i class="exp"></i><span>Is Focusable</span></label><div class="value"><input id="focus" type="checkbox" checked></div></div>
          <button class="advanced" aria-label="Show advanced"><svg viewBox="0 0 16 12"><path d="M0 0H16V2H0ZM1 4H15L8 11Z" fill="#e0e0e0"/></svg></button>

          <h3 class="category"><svg><use href="#i-open"/></svg><span class="shadowed">Accessibility</span></h3>
          <div class="prop"><label class="name" for="ovr"><i class="exp"></i><span>Override Accessible Defaults</span></label><div class="value"><input id="ovr" type="checkbox"></div></div>
          <div class="prop off"><label class="name" for="kids"><i class="exp"></i><span>Can Children be Accessible</span></label><div class="value"><input id="kids" type="checkbox" disabled></div></div>
          <div class="prop off medium"><label class="name" for="beh"><i class="exp"></i><span>Accessible Behavior</span></label><div class="value"><div class="summary"><select id="beh" disabled><option>Summary</option></select><svg><use href="#i-down"/></svg></div></div></div>
          <button class="advanced" aria-label="Show advanced"><svg viewBox="0 0 16 12"><path d="M0 0H16V2H0ZM1 4H15L8 11Z" fill="#e0e0e0"/></svg></button>
          <div class="scrollbar over"><div class="thumb details-thumb"></div></div>
        </div>
      </div>
    </section>
  </main>

  <footer class="bottom-tabs">
    <div class="tab"><svg class="tab-icon" viewBox="0 0 24 24"><path d="M1 12Q8 18 12 10L16 15Q12 22 6 20Z" fill="#9aa0a6"/><path d="M10 8L17 1L23 6L16 14Z" fill="#cfe4f2"/></svg><h2 class="shadowed">Animations</h2><button class="tab-close" aria-label="Close"><svg><use href="#i-close"/></svg></button></div>
    <div class="tab dark"><svg class="tab-icon" viewBox="0 0 24 24"><path d="M0 5L23 3V8L1 10ZM2 11L23 9V14L3 16ZM1 17L21 15V19L2 21Z" fill="#c8d6f3"/><path d="M9 4L15 3V8L10 9ZM12 10L19 9V14H13Z" fill="#6f8ed6"/></svg><h2 class="shadowed">Timeline</h2><button class="tab-close" aria-label="Close"><svg><use href="#i-close"/></svg></button></div>
    <div class="tab"><svg class="tab-icon" viewBox="0 0 24 24"><path d="M4 1L22 2V22L2 23Z" fill="#bccbf2"/><path d="M6 6L14 11L6 16" fill="none" stroke="#22304e" stroke-width="3"/><path d="M12 19H20" stroke="#22304e" stroke-width="3"/></svg><h2 class="shadowed">Compiler Results</h2><button class="tab-close" aria-label="Close"><svg><use href="#i-close"/></svg></button></div>
  </footer>
</div>
</body>
</html>
```
FILE: styles.css
```css
* { box-sizing: border-box; }
body { margin: 0; background: #191919; color: #dcdcdc; font: 18px/22px Roboto, sans-serif; overflow: hidden; }
h2, h3, h4, p, ul { margin: 0; padding: 0; font-weight: 400; list-style: none; }
h2 { font-size: 18px; }
button { margin: 0; padding: 0; border: 0; background: none; color: inherit; font: inherit; }
input, select { margin: 0; font: inherit; color: #000; appearance: none; border: 0; border-radius: 3px; outline: 0; }
svg { display: block; flex: none; }
.defs { position: absolute; width: 0; height: 0; }
.shadowed { text-shadow: 2px 2px 0 #000; }

.window { display: flex; flex-direction: column; height: 100vh; padding: 8px 8px 6px; border: 1px solid #4c4f4e; border-right-color: #2b2b2b; background: #191919; }

/* Title bar */
.titlebar { position: relative; flex: none; display: flex; align-items: flex-start; height: 52px; background: linear-gradient(#4c4c4c, #363636 35%, #232323 80%); }
.logo { width: 30px; height: 30px; margin: 3px 0 0 2px; }
.doc-tab { position: relative; align-self: flex-end; display: flex; align-items: center; gap: 8px; width: 316px; height: 37px; margin-left: 21px; padding: 0 31px 2px 25px; color: #e6e6e6; }
.doc-shape { position: absolute; inset: 0; width: 100%; height: 100%; }
.doc-icon { position: relative; width: 27px; height: 26px; }
.doc-tab span { position: relative; }
.doc-tab .tab-close { position: relative; color: #5a5a5a; }
.tab-close { margin-left: auto; color: #252525; }
.tab-close svg { width: 9px; height: 9px; }
.win-buttons { display: flex; gap: 2px; margin-left: auto; margin-right: 2px; }
.win-buttons button { display: grid; place-items: center; width: 35px; height: 23px; border: 1px solid #8d8d8d; border-top: 0; border-radius: 0 0 3px 3px; background: linear-gradient(#555, #777 50%, #555); }
.win-buttons .wide { width: 62px; }
.win-buttons svg { width: 20px; height: 16px; }
.tutorial { position: absolute; z-index: 2; right: 130px; top: -11px; width: 72px; height: 72px; }

.menubar { flex: none; display: flex; align-items: center; gap: 30px; height: 30px; padding: 0 9px 0 14px; margin-bottom: 1px; border: 1px solid #000; background: linear-gradient(#1e1e1e, #262626 50%, #1a1a1a 52%, #202020); }
.parent-class { display: flex; gap: 9px; margin-left: auto; color: #828282; }
.parent-class a { color: #dcdcdc; font-size: 20px; text-decoration: none; border-bottom: 2px dotted #dcdcdc; }

/* Toolbar */
.toolbar { flex: none; display: flex; height: 94px; margin-bottom: 8px; border-bottom: 1px solid #444; background: linear-gradient(135deg, #a07f1c 10px, #3e3e3e 10px); }
.tool-group { display: flex; align-items: center; margin: 4px 0; padding: 0 20px; border-right: 2px solid #303030; }
.tool-group.first { padding-left: 9px; }
.tool-group.last { border: 0; padding-right: 0; }
.tool { display: flex; flex-direction: column; align-items: center; white-space: nowrap; }
.tool svg { width: 60px; height: 60px; }
.tool.gap { margin-left: 14px; }
.w72 { width: 72px; } .w64 { width: 64px; } .w60 { width: 60px; } .w135 { width: 135px; }
.tool-more { width: 18px; margin-left: 18px; color: #bcbcbc; }
.play-more { margin-left: 22px; }
.tool-more svg { width: 12px; height: 8px; margin: auto; }
.debug { display: flex; flex-direction: column; align-items: center; gap: 3px; margin: 14px 0 0 13px; color: #d0d0d0; }
.combo { position: relative; width: 235px; height: 33px; }
.combo select { width: 100%; height: 100%; padding: 0 9px; border: 1px solid #8d8d8d; background: #dcdedd; }
.combo svg { position: absolute; right: 11px; top: 13px; width: 12px; height: 8px; color: #000; }
.modes { display: flex; align-items: center; gap: 6px; margin-left: auto; margin-right: 15px; padding-top: 2px; }
.mode { display: flex; align-items: center; gap: 8px; height: 66px; padding: 0 8px; font-size: 28px; }
.mode svg { width: 60px; height: 60px; }
.mode.active { padding: 0 13px 0 8px; border-radius: 3px; background: #d8820b; }
.mode.light { font-weight: 300; }
.chevron { width: 14px; height: 30px; }

/* Docked panels */
.workspace { flex: 1; min-height: 0; display: flex; gap: 8px; margin-top: -8px; padding-top: 8px; }
.workspace, .bottom-tabs { background: #222; }
.side { flex: none; display: flex; flex-direction: column; min-height: 0; }
.left { width: 372px; gap: 8px; }
.right { width: 486px; }
.dock { display: flex; flex-direction: column; min-height: 0; }
.left .dock { flex: 1; }
.tab { flex: none; display: flex; align-items: center; gap: 9px; width: 225px; height: 33px; margin-left: 6px; padding: 0 15px 0 9px; border-radius: 3px 3px 0 0; background: #3e3e3e; }
.tab-icon { width: 24px; height: 22px; }
.panel { flex: 1; min-height: 0; display: flex; flex-direction: column; background: #3e3e3e; }
.search { position: relative; height: 27px; }
.search input { width: 100%; height: 100%; padding: 0 8px; background: #cbcbcb; }
.search input::placeholder { color: #8a8a8a; }
.search svg { position: absolute; right: 0; top: 2px; width: 24px; height: 24px; }
.scroller { position: relative; flex: 1; min-height: 0; display: flex; gap: 4px; overflow: hidden; }
.scrollbar { flex: none; width: 16px; background: linear-gradient(#666, #666) 8px 0 / 1px 100% no-repeat; }
.thumb { border: 1px solid #222; border-radius: 3px; background: #fff; }
.fade-bottom, .fade-top { position: absolute; left: 0; right: 0; height: 8px; }
.fade-bottom { bottom: 0; background: linear-gradient(transparent, rgba(0, 0, 0, .6)); }
.fade-top { top: 0; background: linear-gradient(rgba(0, 0, 0, .6), transparent); }

.palette .search { margin: 9px 9px 0; }
.palette .scroller { margin: 6px 7px 4px 3px; }
.palette-list { flex: 1; }
.group { display: flex; align-items: center; gap: 5px; height: 30px; padding-bottom: 2px; font-size: 20px; font-weight: 700; background: #2e2e2e; color: #e0e0e0; }
.group svg { width: 12px; height: 12px; color: #bdbdbd; margin-left: 1px; }
.palette ul { padding-top: 1px; }
.palette li { display: flex; align-items: center; height: 30px; padding-left: 33px; }
.star { width: 14px; height: 14px; margin-right: 4px; }
.pi { width: 24px; height: 24px; margin-right: 3px; }
.palette-thumb { height: 142px; margin-top: 3px; }

.hierarchy .search { margin: 12px 12px 0; }
.hierarchy .scroller { margin: 6px 10px 7px 6px; }
.tree { flex: 1; min-width: 0; display: grid; grid-template-columns: minmax(0, 1fr); grid-auto-rows: 1fr; padding: 5px 0 1px; }
.tree li { display: flex; align-items: center; min-height: 0; padding-right: 5px; white-space: nowrap; }
.tree li span { flex: 1; min-width: 0; overflow: hidden; }
.tree .tri { flex: none; width: 11px; height: 11px; color: #bdbdbd; }
.tree .ti { width: 30px; height: 24px; }
.l0 { padding-left: 61px; } .l1 { padding-left: 76px; } .l2 { padding-left: 91px; } .l3 { padding-left: 106px; }
.tree .strong { font-size: 20px; font-weight: 700; }
.tree .selected { background: #868686; color: #000; }
.tree .selected .tri { color: #000; }
.lk { width: 18px; height: 18px; margin: 0 10px 0 4px; }
.ey { width: 20px; height: 14px; }
.tree-thumb { height: 112px; margin-top: 40px; }

/* Designer */
.designer { position: relative; flex: 1; min-width: 0; padding: 27px 0 0 27px; border: 3px solid #3e3e3e; background: #2e2e2e; }
.designer::before { content: ""; position: absolute; z-index: 1; left: -3px; top: -3px; width: 15px; height: 15px; background: #a07f1c; clip-path: polygon(0 0, 100% 0, 0 100%); }
.rulers { position: absolute; inset: 0; width: 100%; height: 100%; }
.canvas { position: relative; height: 100%; overflow: hidden; background: #252525; }
.gridlines { position: absolute; width: 100%; height: 100%; }
.artboard { position: absolute; left: 0; top: 20px; bottom: 0; width: 949px; border: solid #0aa8f5; border-width: 2px 2px 0 0; background: linear-gradient(#15191a, #15191a) 0 0 / 100% 1px no-repeat, linear-gradient(#15191a, #15191a) 100% 0 / 1px 100% no-repeat, #6be4ff; }
.dashed {
  background:
    repeating-linear-gradient(90deg, #222 0 3px, #fff 3px 6px) 0 0 / 100% 1px no-repeat,
    repeating-linear-gradient(90deg, #222 0 3px, #fff 3px 6px) 0 100% / 100% 1px no-repeat,
    repeating-linear-gradient(#222 0 3px, #fff 3px 6px) 0 0 / 1px 100% no-repeat,
    repeating-linear-gradient(#222 0 3px, #fff 3px 6px) 100% 0 / 1px 100% no-repeat;
}
.blank { position: absolute; left: -1px; top: 134px; width: 327px; height: 571px; background-color: #dbdddc; }
.widget { position: absolute; left: 471px; top: 142px; width: 449px; height: 584px; background-color: #e8e8e8; color: #000; font-size: 22px; }
.rule { background: repeating-linear-gradient(90deg, #787878 0 4px, #fff 4px 8px) 0 100% / 100% 1px no-repeat; }
.widget h4 { height: 29px; padding-top: 1px; font-size: 22px; line-height: 24px; font-weight: 700; text-align: center; white-space: nowrap; }
.cyan { height: 33px; padding-bottom: 2px; border: 1px solid #6d9ba0; border-radius: 2px; background: linear-gradient(#4ddbe2, #3aa3a9); color: #fff; font-size: 22px; line-height: 24px; font-weight: 700; }
.pair { display: grid; grid-template-columns: 1fr 1fr; gap: 27px; padding: 13px 13px 0; }
.echo { height: 58px; }
.chosen { position: relative; height: 33px; }
.chosen .cyan { width: 100%; outline: 2px solid #0f0; outline-offset: 1px; }
.shift { position: absolute; top: -2px; width: 30px; height: 45px; border: 1px solid #777; border-radius: 3px; background: linear-gradient(#ddd, #aaa); font-size: 16px; }
.prev { left: -22px; } .next { right: -22px; }
.quad { display: grid; grid-template-columns: 1fr 1fr; gap: 12px 13px; height: 91px; padding: 8px 6px 5px 7px; }
.volume { display: flex; align-items: center; height: 53px; padding: 0 13px 2px 16px; }
.volume input { flex: 1; height: 10px; background: linear-gradient(#fff, #fff) 0 1px / 100% 7px no-repeat; }
.volume input::-webkit-slider-thumb { appearance: none; width: 5px; height: 9px; background: #b5b5b5; }
.volume output { width: 54px; text-align: right; }
.full { display: block; width: calc(100% - 26px); height: 29px; margin: 11px 13px; padding: 0; }
.widget .profile { height: 28px; }
.combos { height: 34px; padding-top: 6px; }
.mini { position: relative; height: 23px; }
.mini select { width: 100%; height: 100%; padding: 0 3px 2px; border: 1px solid #8a8a8a; border-radius: 1px; background: linear-gradient(#ccc, #adadad); font-size: 14px; font-weight: 700; }
.mini svg { position: absolute; right: 4px; top: 9px; width: 7px; height: 5px; }
.mark { position: absolute; color: rgba(255, 255, 255, .22); font-size: 28px; line-height: 38px; font-weight: 700; white-space: nowrap; }
.zoom-mark { left: 9px; top: 5px; }
.size-mark { right: 684px; top: 5px; }
.info-mark { left: 9px; bottom: 2px; }
.dpi-mark { right: 50px; bottom: 2px; }
.settings { position: absolute; right: 14px; bottom: 7px; width: 24px; height: 24px; }
.overlay { position: absolute; top: 2px; right: 0; display: flex; gap: 1px; color: #000; font-weight: 700; }
.seg { display: flex; height: 38px; }
.apart { margin-left: 4px; }
.end { margin-left: 1px; }
.seg button { display: flex; align-items: center; justify-content: center; height: 38px; border: 1px solid #111; background: rgba(215, 215, 215, .8); }
.seg button:first-child { border-radius: 10px 0 0 10px; }
.seg button:last-child { border-radius: 0 10px 10px 0; }
.seg button:only-child { border-radius: 10px; }
.seg svg { width: 26px; height: 26px; }
.seg .on { background: #b96f08; }
.seg .gray { color: #555; font-size: 20px; }
.seg .low { height: 35px; margin-top: 2px; }
.seg .dim { background: rgba(130, 140, 142, .8); }
.seg .text { height: 32px; margin-top: 3px; gap: 2px; }
.seg .text svg { width: 12px; height: 8px; }
.seg .drop { flex-direction: column; gap: 3px; }
.seg .drop svg { width: 6px; height: 4px; }
.w35 { width: 35px; } .w36 { width: 36px; } .w37 { width: 37px; } .w69 { width: 70px; } .w112 { width: 113px; } .w119 { width: 120px; }

/* Details */
.name-row { display: flex; align-items: center; height: 27px; margin: 15px 15px 0; }
.name-icon { width: 18px; height: 13px; margin-right: 8px; }
.field { height: 28px; padding: 0 8px; border-radius: 5px; background: #d8d8d8; }
.name-row .field { width: 300px; padding: 0 7px; margin-right: 10px; }
.check { display: flex; align-items: center; gap: 5px; white-space: nowrap; }
[type=checkbox] { display: grid; place-items: center; width: 22px; height: 22px; border-radius: 3px; background: #dcdcdc; }
[type=checkbox]:not(:checked) { background: #acacac; }
[type=checkbox]:disabled { background: #6b6b6b; }
[type=checkbox]:checked::before { content: ""; width: 16px; height: 14px; background: #666; clip-path: polygon(0 52%, 18% 38%, 36% 62%, 82% 0, 100% 14%, 40% 100%); }
.find-row { display: flex; align-items: center; height: 35px; margin: 12px 9px 0 6px; }
.find-row .search { width: 369px; }
.matrix { display: grid; place-items: center; width: 40px; height: 34px; margin-left: 13px; border: 1px solid #777; border-radius: 2px; background: linear-gradient(#ddd, #aaa); }
.matrix svg { width: 22px; height: 24px; }
.view { display: flex; align-items: center; gap: 5px; margin-left: 6px; color: #bdbdbd; }
.bigeye { width: 26px; height: 16px; }
.dd { width: 12px; height: 8px; }
.props { position: relative; flex: 1; min-height: 0; margin: 1px 3px 3px; overflow: hidden; font-size: 16px; }
.category, .prop { background: linear-gradient(#252525, #252525) 160px 0 / 2px 100% no-repeat; }
.category { display: flex; align-items: center; gap: 6px; height: 44px; padding: 0 0 2px 4px; border-radius: 4px 4px 0 0; background-color: #2e2e2e; font-size: 20px; font-weight: 700; color: #e0e0e0; }
.category svg { width: 11px; height: 11px; margin-top: 4px; color: #bdbdbd; }
.category.spaced { margin-top: 3px; }
.prop { display: grid; grid-template-columns: 160px 1fr; align-items: center; height: 36px; }
.prop.tall { height: 49px; }
.prop.medium { height: 40px; }
.prop.pad { height: 14px; }
.name { display: flex; align-items: center; padding-right: 5px; white-space: nowrap; }
.name span { flex: 1; overflow: hidden; }
.name .exp { flex: none; width: 8px; height: 14px; margin: 0 8px; }
.name span:last-child { margin-right: -5px; }
.tag { width: 16px; height: 16px; margin-left: 8px; }
.value { display: flex; align-items: center; padding-left: 5px; }
.value.size { padding-left: 11px; gap: 6px; }
.value.aligns { padding-left: 8px; gap: 6px; }
.long { width: 264px; }
.short { width: 60px; margin-left: 3px; font-size: 18px; }
.reset { width: 14px; height: 13px; margin-left: 5px; }
.size .reset { margin-left: 2px; }
.opt { width: 49px; height: 28px; border-radius: 3px; background: #4e4e4e; font-size: 18px; }
.value .on { background: #d8820b; }
.aligns button { width: 36px; height: 36px; border-radius: 3px; background: #4e4e4e; }
.swatch { width: 264px; height: 18px; }
.white { background: #fff; }
.aqua { background: #5bf7ff; }
.value [type=checkbox] { margin-left: 1px; }
.advanced { display: flex; justify-content: center; width: 100%; height: 20px; margin-top: 3px; padding: 4px 23px 0 0; border-top: 1px solid #343434; background: #484848; }
.advanced svg { width: 16px; height: 12px; }
.off { color: #7e7e7e; }
.summary { position: relative; width: 104px; height: 29px; margin-left: 1px; }
.summary select { width: 100%; height: 100%; padding: 0 7px; border: 1px solid #2b2b2b; background: linear-gradient(#8b8b8b, #757575); color: #222; opacity: 1; }
.summary svg { position: absolute; right: 10px; top: 11px; width: 12px; height: 8px; color: #222; }
.over { position: absolute; top: 4px; right: 4px; bottom: 0; }
.details-thumb { height: 259px; }

.bottom-tabs { flex: none; display: flex; height: 38px; padding-top: 8px; }
.bottom-tabs .tab { height: 30px; padding-top: 2px; }
.bottom-tabs .dark { background: #2c2c2c; margin-left: 66px; }
.bottom-tabs .dark + .tab { margin-left: 2px; }
```
